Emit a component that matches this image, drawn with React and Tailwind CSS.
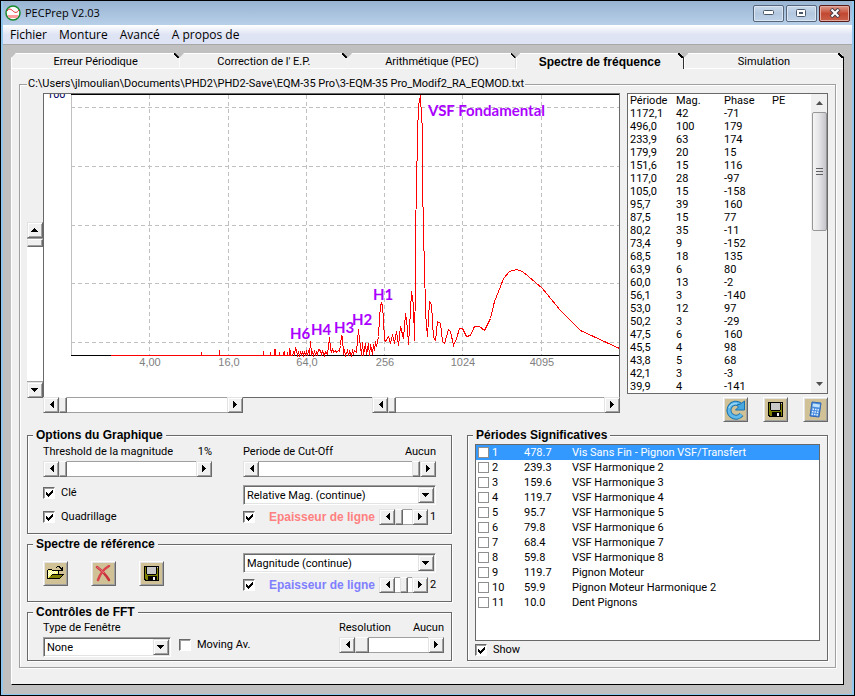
import { useState } from 'react';
import clsx from 'clsx';

const MENUS = ['Fichier', 'Monture', 'Avancé', 'A propos de'];

const TABS = [
    'Erreur Périodique',
    "Correction de l' E.P.",
    'Arithmétique (PEC)',
    'Spectre de fréquence',
    'Simulation',
];

const PERIODS = [
    ['1172,1', '42', '-71'],
    ['496,0', '100', '179'],
    ['233,9', '63', '174'],
    ['179,9', '20', '15'],
    ['151,6', '15', '116'],
    ['117,0', '28', '-97'],
    ['105,0', '15', '-158'],
    ['95,7', '39', '160'],
    ['87,5', '15', '77'],
    ['80,2', '35', '-11'],
    ['73,4', '9', '-152'],
    ['68,5', '18', '135'],
    ['63,9', '6', '80'],
    ['60,0', '13', '-2'],
    ['56,1', '3', '-140'],
    ['53,0', '12', '97'],
    ['50,2', '3', '-29'],
    ['47,5', '6', '160'],
    ['45,5', '4', '98'],
    ['43,8', '5', '68'],
    ['42,1', '3', '-3'],
    ['39,9', '4', '-141'],
];

const SIGNIFICANT = [
    ['1', '478.7', 'Vis Sans Fin - Pignon VSF/Transfert'],
    ['2', '239.3', 'VSF Harmonique 2'],
    ['3', '159.6', 'VSF Harmonique 3'],
    ['4', '119.7', 'VSF Harmonique 4'],
    ['5', '95.7', 'VSF Harmonique 5'],
    ['6', '79.8', 'VSF Harmonique 6'],
    ['7', '68.4', 'VSF Harmonique 7'],
    ['8', '59.8', 'VSF Harmonique 8'],
    ['9', '119.7', 'Pignon Moteur'],
    ['10', '59.9', 'Pignon Moteur Harmonique 2'],
    ['11', '10.0', 'Dent Pignons'],
];

const GRID_X = [
    [149, '4,00'],
    [228, '16,0'],
    [306, '64,0'],
    [384, '256'],
    [462, '1024'],
    [541, '4095'],
];
const GRID_Y = [107, 166, 225, 283, 342];

// Isolated lines on the left of the spectrum: [x, top]
const SPIKES = [
    [201, 352], [219, 350], [263, 351], [270, 352], [274, 349], [275, 349], [279, 352],
    [283, 352], [284, 351], [287, 352], [289, 348], [290, 350],
];

// Noise floor followed by the main peaks
const CURVE = [
    [111, 355], [292, 355], [293, 352], [294, 355], [295, 347], [296, 350], [297, 355], [298, 352], [299, 355],
    [300, 352], [301, 354], [302, 352], [303, 355], [304, 351], [305, 355], [306, 351], [307, 354], [308, 351],
    [309, 354], [310, 341], [311, 354], [312, 352], [313, 355], [314, 351], [315, 354], [316, 352], [317, 355],
    [318, 349], [320, 350], [321, 354], [322, 351], [324, 355], [325, 351], [327, 354], [328, 346], [329, 337],
    [330, 348], [331, 352], [332, 348], [333, 352], [335, 350], [336, 352], [338, 350], [339, 351], [340, 345],
    [341, 335], [342, 336], [343, 354], [344, 349], [345, 355], [347, 350], [348, 355], [349, 351], [351, 355],
    [352, 350], [353, 353], [354, 350], [355, 351], [356, 352], [357, 340], [358, 329],
    [359, 340], [360, 345], [361, 355], [362, 342], [363, 355], [365, 343], [366, 354], [368, 343], [369, 355],
    [370, 344], [372, 354], [373, 344], [374, 350], [375, 341], [376, 346],
    [377, 341], [378, 336], [379, 318], [380, 305], [381, 303], [382, 305], [383, 320], [384, 339], [385, 341],
    [388, 336], [390, 343], [392, 334], [394, 343], [396, 331], [398, 345], [400, 326], [403, 338], [405, 313],
    [407, 328], [408, 344], [410, 310], [411, 291], [413, 305], [414, 340], [415, 285], [415, 232], [416, 188],
    [417, 135], [418, 105], [420, 95], [421, 118], [422, 127], [422, 175], [423, 238], [424, 263], [425, 312],
    [427, 336], [429, 301], [431, 304], [433, 337], [435, 340], [437, 321], [440, 323], [442, 341], [444, 343],
    [448, 329], [450, 331], [453, 345], [456, 338], [459, 328], [462, 328], [466, 336], [470, 335], [474, 326],
    [479, 326], [484, 330], [490, 318], [494, 301], [500, 286], [503, 278], [509, 271], [516, 269], [522, 271],
    [528, 276], [542, 288], [560, 310], [580, 330], [593, 336], [619, 348],
];

const NOTES = [
    [428, 116, 'VSF Fondamental'],
    [373, 300, 'H1'],
    [352, 325, 'H2'],
    [334, 333, 'H3'],
    [311, 335, 'H4'],
    [290, 339, 'H6'],
];

const bevel = 'border border-t-[#e3e3e3] border-l-[#e3e3e3] border-r-[#696969] border-b-[#696969] bg-[#f0f0f0] shadow-[inset_1px_1px_0_#fff,inset_-1px_-1px_0_#a0a0a0]';

const ARROWS = {
    left: 'M7 0v7L3 3.5z',
    right: 'M2 0v7l4-3.5z',
    up: 'M0 6h7L3.5 2z',
    down: 'M0 2h7L3.5 6z',
};

function Arrow({ dir }) {
    return (
        <svg width="8" height="8" viewBox="0 0 8 8" shapeRendering="crispEdges" aria-hidden="true">
            <path d={ARROWS[dir]} />
        </svg>
    );
}

function ArrowButton({ dir, onClick }) {
    return (
        <button type="button" aria-label={dir} onClick={onClick} className={clsx('flex size-4 shrink-0 items-center justify-center', bevel)}>
            <Arrow dir={dir} />
        </button>
    );
}

const thumb = '[&::-webkit-slider-thumb]:appearance-none [&::-webkit-slider-thumb]:rounded-none [&::-webkit-slider-thumb]:bg-[#f0f0f0] [&::-webkit-slider-thumb]:border [&::-webkit-slider-thumb]:border-t-white [&::-webkit-slider-thumb]:border-l-[#e3e3e3] [&::-webkit-slider-thumb]:border-r-[#696969] [&::-webkit-slider-thumb]:border-b-[#696969] [&::-webkit-slider-thumb]:shadow-[inset_-1px_-1px_0_#a0a0a0]';

function ScrollBar({ label, value = 0, vertical, wide, className }) {
    const [pos, setPos] = useState(value);
    const move = (d) => setPos((p) => Math.min(100, Math.max(0, p + d)));

    return (
        <div className={clsx('flex', vertical ? 'w-4 flex-col' : 'h-4', className)}>
            <ArrowButton dir={vertical ? 'up' : 'left'} onClick={() => move(-5)} />
            <input
                type="range"
                aria-label={label}
                value={pos}
                onChange={(e) => setPos(Number(e.target.value))}
                className={clsx(
                    'm-0 block min-h-0 min-w-0 flex-1 appearance-none border-[#a0a0a0] bg-white',
                    thumb,
                    vertical
                        ? 'w-4 border-x [writing-mode:vertical-lr] [&::-webkit-slider-thumb]:h-2 [&::-webkit-slider-thumb]:w-4'
                        : 'h-4 border-y [&::-webkit-slider-thumb]:h-4',
                    !vertical && (wide ? '[&::-webkit-slider-thumb]:w-[14px]' : '[&::-webkit-slider-thumb]:w-2')
                )}
            />
            <ArrowButton dir={vertical ? 'down' : 'right'} onClick={() => move(5)} />
        </div>
    );
}

function Check({ label, text, defaultChecked, className }) {
    return (
        <label className={clsx('flex h-4 items-center gap-[6px]', className)}>
            <span className="relative block size-3 shrink-0">
                <input
                    type="checkbox"
                    aria-label={label}
                    defaultChecked={defaultChecked}
                    className="peer block size-3 appearance-none border border-t-[#696969] border-l-[#696969] border-r-white border-b-white bg-white shadow-[inset_1px_1px_0_#a0a0a0]"
                />
                <svg className="pointer-events-none absolute inset-0 hidden peer-checked:block" width="12" height="12" viewBox="0 0 12 12" aria-hidden="true">
                    <path d="M3 5v3l2 2 5-5V2L5 7z" shapeRendering="crispEdges" />
                </svg>
            </span>
            {text}
        </label>
    );
}

function Combo({ label, options, className }) {
    return (
        <div className={clsx('relative h-5', className)}>
            <select
                aria-label={label}
                className="block h-5 w-full appearance-none rounded-none border border-t-[#a0a0a0] border-l-[#a0a0a0] border-r-white border-b-white bg-white pt-px pl-[3px] shadow-[inset_1px_1px_0_#696969,inset_-1px_-1px_0_#e3e3e3]"
            >
                {options.map((o) => <option key={o}>{o}</option>)}
            </select>
            <span className={clsx('pointer-events-none absolute inset-y-[2px] right-[2px] flex w-4 items-center justify-center', bevel)}>
                <Arrow dir="down" />
            </span>
        </div>
    );
}

function Group({ title, className, children }) {
    return (
        <fieldset className="min-w-0 flex-1 border border-[#696969] shadow-[1px_1px_0_#fff,inset_1px_1px_0_#fff]">
            <legend className="ml-[5px] h-[14px] bg-[#f0f0f0] px-[3px] font-['Liberation_Sans',sans-serif] text-[12px] leading-[14px] font-bold">{title}</legend>
            <div className={className}>{children}</div>
        </fieldset>
    );
}

function IconButton({ label, children }) {
    return (
        <button
            type="button"
            aria-label={label}
            className="flex size-[25px] items-center justify-center border border-t-white border-l-white border-r-[#696969] border-b-[#696969] bg-[#d0c296] shadow-[inset_1px_1px_0_#e3e3e3,inset_-1px_-1px_0_#a0a0a0]"
        >
            {children}
        </button>
    );
}

function FloppyIcon() {
    return (
        <svg width="15" height="15" viewBox="0 0 15 15" shapeRendering="crispEdges">
            <path d="M0 0h15v15H1L0 14z" />
            <path d="M1 1h1v7h1v1h9V8h1V2h1v12h-1v-4H4v4H2l-1-1z" fill="#808000" />
            <path d="M3 1h9v7H3z" fill="#c8c8c8" />
            <path d="M13 1h1v1h-1z" fill="#c8c8c8" />
            <path d="M9 11h2v3H9z" fill="#f0f0f0" />
        </svg>
    );
}

function OpenIcon() {
    return (
        <svg width="17" height="14" viewBox="0 0 17 14" shapeRendering="crispEdges">
            <path d="M0 4h1V3h4v1h7v4h5v1h-1v1h-1v1h-1v1h-1v1H0z" />
            <path d="M1 4h4v1h6v3H5v1H4v1H3v1H2v1H1z" fill="#ffff80" />
            <path d="M1 5h1v1H1zM3 5h1v1H3zM5 5h1v1H5zM7 5h1v1H7zM2 6h1v1H2zM4 6h1v1H4zM6 6h1v1H6zM8 6h1v1H8zM1 7h1v1H1zM3 7h1v1H3zM5 7h1v1H5zM2 8h1v1H2zM1 9h1v1H1z" fill="#fff" />
            <path d="M5 9h10v1h-1v1h-1v1H2v-1h1v-1h2z" fill="#808000" />
            <path d="M9 1h1V0h3v1h1v1h1V1h1v4h-4V4h2V3h-1V2h-1V1h-2v1H9z" />
        </svg>
    );
}

function DeleteIcon() {
    return (
        <svg width="17" height="17" viewBox="0 0 17 17" fill="none" strokeLinecap="round">
            <path d="M2 2c4 3 9 8 12 13" stroke="#c8323c" strokeWidth="2.500" />
            <path d="M14 1C9 4 5 9 3 15" stroke="#d8434c" strokeWidth="2.500" />
            <path d="M2 2c3 2 5 4 7 6" stroke="#f07880" strokeWidth="1" />
        </svg>
    );
}

function RefreshIcon() {
    return (
        <svg width="21" height="20" viewBox="0 0 21 20">
            <path d="M16.500 14.500A7 7 0 1 1 15 4.500" fill="none" stroke="#1b72b0" strokeWidth="5" />
            <path d="M16.500 14.500A7 7 0 1 1 15 4.500" fill="none" stroke="#5fb9ea" strokeWidth="3" />
            <path d="M19.500 1v9h-9l3-3-2-2 4-1z" fill="#49a7e0" stroke="#1b72b0" />
            <path d="M4 8c1-3 4-5 8-4" fill="none" stroke="#b5e3fa" />
        </svg>
    );
}

function CalcIcon() {
    return (
        <svg width="13" height="17" viewBox="0 0 13 17">
            <path d="M3 1l9 1-2 14-9-1z" fill="#4c8fe0" stroke="#2f66b5" />
            <path d="M4 2.500l7 1-.5 3-7-1z" fill="#c3e2fb" />
            <path d="M3.500 8l6.500 1M3 10.500l6.500 1M2.500 13l6.500 1" stroke="#e4f1ff" strokeWidth="1.500" strokeDasharray="1.500 1" />
        </svg>
    );
}

function TitleBar() {
    const btn = 'flex h-[17px] w-[31px] items-center justify-center rounded-[2px] border border-[#56677c] bg-linear-to-b from-[#c9d9ea] via-[#b3c8df] via-50% to-[#bfd2e8] shadow-[inset_0_0_0_1px_#dbe6f2]';

    return (
        <header className="flex h-6 items-center bg-linear-to-b from-[#98b4d2] to-[#b8cfe8] pr-[2px] pl-[2px]">
            <svg width="16" height="16" viewBox="0 0 16 16" aria-hidden="true">
                <circle cx="8" cy="8" r="7" fill="#fff" stroke="#178a2c" strokeWidth="1.500" />
                <path d="M2 6c2-3 4-2 6 0s4 2 6-1" fill="none" stroke="#e02020" />
                <path d="M2 10h12l-2 3H4z" fill="#ff9c9c" />
            </svg>
            <h1 className="ml-1 flex-1 font-['Open_Sans','Noto_Sans',sans-serif] text-[11px]">PECPrep V2.03</h1>
            <div className="flex gap-[2px]">
                <button type="button" aria-label="Réduire" className={btn}>
                    <svg width="12" height="6"><rect x="0.500" y="0.500" width="10" height="4" rx="1" fill="#fff" stroke="#4a5768" /></svg>
                </button>
                <button type="button" aria-label="Agrandir" className={btn}>
                    <svg width="11" height="9">
                        <rect x="0.500" y="0.500" width="9" height="7" rx="1" fill="#fff" stroke="#4a5768" />
                        <rect x="3.500" y="3.500" width="3" height="1" fill="#b3c8df" stroke="#4a5768" />
                    </svg>
                </button>
                <button type="button" aria-label="Fermer" className="flex h-[17px] w-[31px] items-center justify-center rounded-[2px] border border-[#5a1a18] bg-linear-to-b from-[#dc9a8c] via-[#c34832] via-50% to-[#c8604a] shadow-[inset_0_0_0_1px_#e3a99e]">
                    <svg width="12" height="10" viewBox="0 0 12 10">
                        <path d="M2 1l8 8M10 1L2 9" stroke="#4a3a48" strokeWidth="4" />
                        <path d="M2.500 1.500l7 7M9.500 1.500l-7 7" stroke="#fff" strokeWidth="2" />
                    </svg>
                </button>
            </div>
        </header>
    );
}

function Tabs() {
    const [active, setActive] = useState(3);

    return (
        <div role="tablist" className="grid h-4 grid-cols-[21fr_21fr_21fr_21fr_20fr]">
            {TABS.map((tab, i) => {
                const isActive = i === active;
                const isLast = i === TABS.length - 1;
                return (
                    <button
                        key={tab}
                        type="button"
                        role="tab"
                        aria-selected={isActive}
                        onClick={() => setActive(i)}
                        className={clsx(
                            'relative border-t border-l border-t-white border-l-white bg-[#f0f0f0] pt-px leading-[14px] [clip-path:polygon(0_5px,5px_0,calc(100%-4px)_0,100%_4px,100%_100%,0_100%)]',
                            isActive ? "font-['Liberation_Sans',sans-serif] text-[12px] font-bold" : 'shadow-[inset_0_-1px_0_#fff]',
                            (isActive || isLast) && 'border-r border-r-black'
                        )}
                    >
                        {tab}
                        <svg className="absolute -top-px right-0" width="5" height="5" shapeRendering="crispEdges" aria-hidden="true">
                            <path d="M0 0l5 5" stroke="#000" strokeWidth="1.500" />
                        </svg>
                    </button>
                );
            })}
        </div>
    );
}

function SpectrumChart() {
    return (
        <svg viewBox="44 94 575 303" className="block w-full" role="img" aria-label="Spectre de fréquence">
            <g shapeRendering="crispEdges" fill="none" strokeWidth="1">
                <g stroke="#c0c0c0" strokeDasharray="4 3">
                    {GRID_X.map(([x]) => <path key={x} d={`M${x + 0.5} 95V355`} />)}
                    {GRID_Y.map((y) => <path key={y} d={`M71 ${y + 0.5}H619`} />)}
                </g>
                <path d="M71.500 94V355" stroke="#c0c0c0" />
                <path d="M71 94.500H619M71 355.500H619" stroke="#000" />
                <path d="M111 355.500H290" stroke="#f00" />
                <path d={SPIKES.map(([x, y]) => `M${x + 0.5} 355V${y}`).join('')} stroke="#f00" />
                <polyline points={CURVE.map(([x, y]) => `${x + 0.5},${y + 0.5}`).join(' ')} stroke="#f00" />
            </g>
            <text x="47" y="98" className="fill-[#000060] text-[11px]">100</text>
            {GRID_X.map(([x, label]) => (
                <text key={label} x={x + 1} y="366" textAnchor="middle" className="fill-[#808080] font-['Liberation_Sans',sans-serif] text-[11px]">
                    {label}
                </text>
            ))}
            {NOTES.map(([x, y, note]) => (
                <text key={note} x={x} y={y} className="fill-[#aa00ff] font-['Lato',sans-serif] text-[15px] font-bold">
                    {note}
                </text>
            ))}
        </svg>
    );
}

function PeriodList() {
    return (
        <div className="flex border border-[#696969] bg-white">
            <table className="flex-1 table-fixed text-left leading-[13px] font-normal">
                <thead>
                    <tr>
                        <th className="h-[13px] w-12 p-0 pl-[2px] font-normal">Période</th>
                        <th className="w-12 p-0 font-normal">Mag.</th>
                        <th className="w-12 p-0 font-normal">Phase</th>
                        <th className="p-0 font-normal">PE</th>
                    </tr>
                </thead>
                <tbody>
                    {PERIODS.map(([period, mag, phase]) => (
                        <tr key={period}>
                            <td className="h-[13px] p-0 pl-[2px]">{period}</td>
                            <td className="p-0">{mag}</td>
                            <td className="p-0">{phase}</td>
                            <td className="p-0" />
                        </tr>
                    ))}
                </tbody>
            </table>
            <div className="flex w-4 flex-col items-center bg-[#f0f0f0]">
                <svg className="my-[6px]" width="7" height="6" viewBox="0 0 7 6"><path d="M0 5h7L3.500 1z" fill="#505050" /></svg>
                <div className="flex h-[119px] w-[15px] items-center justify-center rounded-[2px] border border-[#979797] bg-linear-to-r from-[#f5f5f5] via-[#e3e3e6] to-[#c4c4ca]">
                    <svg width="7" height="8" shapeRendering="crispEdges"><path d="M0 0.500h7M0 3.500h7M0 6.500h7" stroke="#606060" /></svg>
                </div>
                <svg className="mt-auto mb-[6px]" width="7" height="6" viewBox="0 0 7 6"><path d="M0 1h7L3.500 5z" fill="#505050" /></svg>
            </div>
        </div>
    );
}

function LineWidth({ label, value, pos, className }) {
    return (
        <div className="mt-1 flex h-4 items-center">
            <Check label={label} defaultChecked />
            <span className={clsx("ml-[14px] flex-1 font-['Liberation_Sans',sans-serif] text-[12px] font-bold whitespace-nowrap", className)}>Epaisseur de ligne</span>
            <ScrollBar label={label} value={pos} className="w-[49px]" />
            <span className="w-2 pl-[2px]">{value}</span>
        </div>
    );
}

function SignificantPeriods() {
    const [selected, setSelected] = useState(0);

    return (
        <Group title="Périodes Significatives" className="px-[7px] pt-[2px] pb-[2px]">
            <ul className="h-[197px] border border-[#696969] bg-white">
                {SIGNIFICANT.map(([n, period, name], i) => (
                    <li key={n}>
                        <label
                            onClick={() => setSelected(i)}
                            className={clsx('flex h-[15px] items-center', i === selected && 'bg-[#3399ff] text-white')}
                        >
                            <input type="checkbox" className="ml-[2px] size-[11px] appearance-none border border-[#8e8f8f] bg-white checked:bg-[#3399ff]" />
                            <span className="w-[35px] pl-[3px]">{n}</span>
                            <span className="w-12">{period}</span>
                            <span>{name}</span>
                        </label>
                    </li>
                ))}
            </ul>
            <Check text="Show" defaultChecked className="mt-px" />
        </Group>
    );
}

export default function App() {
    return (
        <div className="flex min-h-screen flex-col border border-black bg-[#a9cdee] font-['Roboto','Liberation_Sans',sans-serif] text-[11px] leading-[14px] text-black">
            <div className="flex flex-1 flex-col border-x-2 border-b border-[#8fc7ee]">
                <TitleBar />
                <nav className="flex h-[19px] items-center gap-3 bg-linear-to-b from-white via-[#dfe4f4] via-50% to-[#dde3f4] pl-[7px] font-['Open_Sans','Noto_Sans',sans-serif] text-[12px]">
                    {MENUS.map((m) => <button key={m} type="button">{m}</button>)}
                </nav>

                <main className="flex-1 border-t border-[#a8a8a8] bg-[#c0c0c0] px-2 pt-2 pb-2">
                    <Tabs />
                    <div className="border-r border-b border-l border-r-black border-b-black border-l-white bg-[#f0f0f0] px-[7px] pt-2 pb-4">
                        <fieldset className="min-w-0 border border-[#a0a0a0] px-[7px] pb-[6px] shadow-[1px_1px_0_#fff,inset_1px_1px_0_#fff]">
                            <legend className="h-[14px] bg-[#f0f0f0] px-px">
                                C:\Users\jlmoulian\Documents\PHD2\PHD2-Save\EQM-35 Pro\3-EQM-35 Pro_Modif2_RA_EQMOD.txt
                            </legend>

                            {/* Spectrum and list of periods */}
                            <div className="mt-[2px] flex items-start">
                                <ScrollBar label="Echelle" vertical className="mt-[129px] h-[176px]" />
                                <div className="min-w-0 flex-1">
                                    <div className="border border-[#696969] bg-white">
                                        <SpectrumChart />
                                    </div>
                                    <div className="-mt-px flex justify-between">
                                        <ScrollBar label="Période minimum" className="w-[200px] bg-[#f0f0f0]" />
                                        <ScrollBar label="Période maximum" className="w-[248px] bg-[#f0f0f0]" />
                                    </div>
                                </div>
                                <div className="ml-[7px] w-[201px]">
                                    <PeriodList />
                                    <div className="mt-[3px] flex justify-end gap-[15px]">
                                        <IconButton label="Recalculer"><RefreshIcon /></IconButton>
                                        <IconButton label="Enregistrer"><FloppyIcon /></IconButton>
                                        <IconButton label="Calculatrice"><CalcIcon /></IconButton>
                                    </div>
                                </div>
                            </div>

                            {/* Options */}
                            <div className="mt-[6px] flex items-start gap-[15px]">
                                <div className="flex w-[425px] flex-col gap-[3px]">
                                    <Group title="Options du Graphique" className="px-[15px] pb-2">
                                        <div className="grid grid-cols-[169px_1fr] gap-[31px] pt-[3px]">
                                            <div>
                                                <div className="flex justify-between">
                                                    <span>Threshold de la magnitude</span>
                                                    <span>1%</span>
                                                </div>
                                                <ScrollBar label="Threshold de la magnitude" className="mt-[2px]" />
                                                <Check text="Clé" defaultChecked className="mt-2" />
                                                <Check text="Quadrillage" defaultChecked className="mt-2" />
                                            </div>
                                            <div>
                                                <div className="flex justify-between">
                                                    <span>Periode de Cut-Off</span>
                                                    <span>Aucun</span>
                                                </div>
                                                <ScrollBar label="Periode de Cut-Off" value={100} className="mt-[2px]" />
                                                <Combo label="Tracé" options={['Relative Mag. (continue)', 'Magnitude (continue)']} className="mt-2" />
                                                <LineWidth label="Epaisseur du tracé" value="1" pos={0} className="text-[#ff8080]" />
                                            </div>
                                        </div>
                                    </Group>

                                    <Group title="Spectre de référence" className="px-[15px] pb-2">
                                        <div className="grid grid-cols-[169px_1fr] items-center gap-[31px] pt-[2px]">
                                            <div className="flex gap-[23px]">
                                                <IconButton label="Ouvrir"><OpenIcon /></IconButton>
                                                <IconButton label="Supprimer"><DeleteIcon /></IconButton>
                                                <IconButton label="Enregistrer la référence"><FloppyIcon /></IconButton>
                                            </div>
                                            <div>
                                                <Combo label="Tracé de référence" options={['Magnitude (continue)', 'Relative Mag. (continue)']} />
                                                <LineWidth label="Epaisseur de la référence" value="2" pos={50} className="text-[#8080ff]" />
                                            </div>
                                        </div>
                                    </Group>

                                    <Group title="Contrôles de FFT" className="pr-[7px] pb-[3px] pl-[15px]">
                                        <div className="flex pt-[2px]">
                                            <div className="w-32">
                                                <div>Type de Fenêtre</div>
                                                <Combo label="Type de Fenêtre" options={['None', 'Hanning', 'Hamming']} className="mt-[2px]" />
                                            </div>
                                            <Check text="Moving Av." className="mt-4 ml-2" />
                                            <div className="ml-auto w-[105px]">
                                                <div className="flex justify-between">
                                                    <span>Resolution</span>
                                                    <span>Aucun</span>
                                                </div>
                                                <ScrollBar label="Resolution" wide className="mt-[2px]" />
                                            </div>
                                        </div>
                                    </Group>
                                </div>

                                <SignificantPeriods />
                            </div>
                        </fieldset>
                    </div>
                </main>
            </div>
        </div>
    );
}
